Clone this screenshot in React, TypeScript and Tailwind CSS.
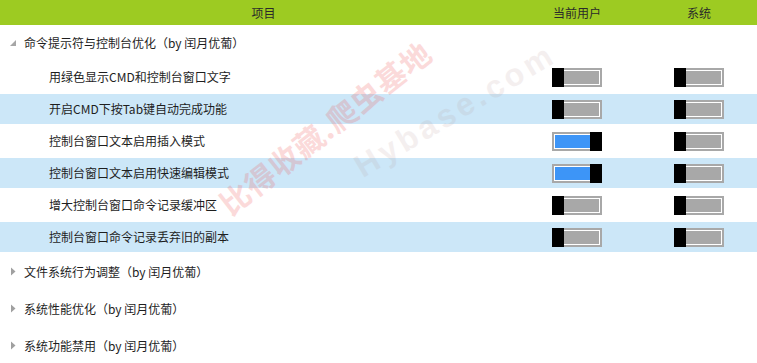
import React from "react";

const font = { fontFamily: '"Microsoft YaHei","Noto Sans CJK SC","Noto Sans",sans-serif' };

function Toggle({ on }: { on: boolean }) {
  return (
    <div className="relative w-[50px] h-[19px] bg-[#a8a8a8] p-[2px]">
      <div className="w-full h-full border border-white">
        <div className={on ? "w-full h-full bg-[#3d95f7]" : "w-full h-full bg-[#a8a8a8]"} />
      </div>
      <div className={"absolute top-0 w-[12px] h-[19px] bg-black " + (on ? "right-0" : "left-0")} />
    </div>
  );
}

function TriDown() {
  return (
    <svg width="8" height="8" viewBox="0 0 8 8" className="block">
      <polygon points="7,1 7,7 1,7" fill="#a6a6a6" />
    </svg>
  );
}

function TriRight() {
  return (
    <svg width="8" height="9" viewBox="0 0 8 9" className="block">
      <polygon points="2,0.5 6.5,4.5 2,8.5" fill="#a0a0a0" />
    </svg>
  );
}

const rows: { label: string; user: boolean; sys: boolean }[] = [
  { label: "用绿色显示CMD和控制台窗口文字", user: false, sys: false },
  { label: "开启CMD下按Tab键自动完成功能", user: false, sys: false },
  { label: "控制台窗口文本启用插入模式", user: true, sys: false },
  { label: "控制台窗口文本启用快速编辑模式", user: true, sys: false },
  { label: "增大控制台窗口命令记录缓冲区", user: false, sys: false },
  { label: "控制台窗口命令记录丢弃旧的副本", user: false, sys: false },
];

const groups = ["文件系统行为调整（by 闰月优葡）", "系统性能优化（by 闰月优葡）", "系统功能禁用（by 闰月优葡）"];

export default function App() {
  return (
    <div className="relative w-[757px] h-[363px] bg-white overflow-hidden text-[12px] text-[#1e1e1e]" style={font}>
      <div className="flex h-[25px] bg-[#9dcb22] items-center text-[#2a2a2a]">
        <div className="w-[527px] text-center">项目</div>
        <div className="w-[100px] text-center">当前用户</div>
        <div className="flex-1 pl-[14px] text-center">系统</div>
      </div>

      <div className="flex items-center h-[36px]">
        <div className="w-[24px] flex justify-center pl-[2px]">
          <TriDown />
        </div>
        <span>命令提示符与控制台优化（by 闰月优葡）</span>
      </div>

      {rows.map((r, i) => (
        <div key={i} className="h-[32px] flex flex-col justify-center">
          <div className={"flex items-center h-[30px] " + (i % 2 === 1 ? "bg-[#cce7f8]" : "")}>
            <div className="w-[527px] pl-[49px]">{r.label}</div>
            <div className="w-[100px] flex justify-center">
              <Toggle on={r.user} />
            </div>
            <div className="flex-1 flex justify-center pl-[14px]">
              <Toggle on={r.sys} />
            </div>
          </div>
        </div>
      ))}

      {groups.map((g) => (
        <div key={g} className="flex items-center h-[37px]">
          <div className="w-[24px] flex justify-center pl-[2px]">
            <TriRight />
          </div>
          <span>{g}</span>
        </div>
      ))}

      <div className="pointer-events-none absolute inset-0">
        <div
          className="absolute left-[170px] top-[105px] w-[310px] text-center text-[30px] font-bold text-[#f04a4a] opacity-20 tracking-[1px]"
          style={{ transform: "rotate(-38deg)" }}
        >
          比得收藏.爬虫基地
        </div>
        <div
          className="absolute left-[325px] top-[86px] w-[260px] text-center text-[32px] font-bold text-[#b89a9a] opacity-15 tracking-[4px]"
          style={{ transform: "rotate(-31deg)", fontFamily: '"Liberation Sans",sans-serif' }}
        >
          Hybase.com
        </div>
      </div>
    </div>
  );
}
